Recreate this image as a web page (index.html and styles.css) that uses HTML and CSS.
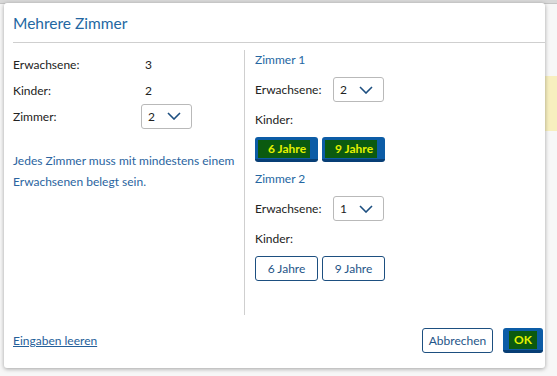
FILE: index.html
```html
<!DOCTYPE html>
<html lang="de">
<head>
<meta charset="UTF-8">
<title>Mehrere Zimmer</title>
<link rel="stylesheet" href="styles.css">
</head>
<body>
    <div class="page">
        <div class="page-top"></div>
        <div class="page-band"></div>
    </div>

    <div class="dialog">
        <div class="dialog-head">Mehrere Zimmer</div>

        <div class="dialog-body">
            <div class="col-left">
                <div class="row"><span class="lbl">Erwachsene:</span><span class="val">3</span></div>
                <div class="row"><span class="lbl">Kinder:</span><span class="val">2</span></div>
                <div class="row"><span class="lbl">Zimmer:</span>
                    <span class="select"><span>2</span>
                        <svg width="14" height="8" viewBox="0 0 14 8"><path d="M1 1 L7 7 L13 1" fill="none" stroke="#1d4f80" stroke-width="1.6"/></svg>
                    </span>
                </div>
                <p class="note">Jedes Zimmer muss mit mindestens einem Erwachsenen belegt sein.</p>
            </div>

            <div class="col-right">
                <div class="room-title">Zimmer 1</div>
                <div class="row2"><span class="lbl2">Erwachsene:</span>
                    <span class="select"><span>2</span>
                        <svg width="14" height="8" viewBox="0 0 14 8"><path d="M1 1 L7 7 L13 1" fill="none" stroke="#1d4f80" stroke-width="1.6"/></svg>
                    </span>
                </div>
                <div class="kid-label">Kinder:</div>
                <div class="kids">
                    <button class="age on"><span class="hl">6 Jahre</span></button>
                    <button class="age on"><span class="hl">9 Jahre</span></button>
                </div>

                <div class="room-title">Zimmer 2</div>
                <div class="row2"><span class="lbl2">Erwachsene:</span>
                    <span class="select"><span>1</span>
                        <svg width="14" height="8" viewBox="0 0 14 8"><path d="M1 1 L7 7 L13 1" fill="none" stroke="#1d4f80" stroke-width="1.6"/></svg>
                    </span>
                </div>
                <div class="kid-label">Kinder:</div>
                <div class="kids">
                    <button class="age">6 Jahre</button>
                    <button class="age">9 Jahre</button>
                </div>
            </div>
        </div>

        <div class="dialog-foot">
            <a href="#" class="clear">Eingaben leeren</a>
            <div class="foot-btns">
                <button class="btn-cancel">Abbrechen</button>
                <button class="btn-ok"><span class="hl">OK</span></button>
            </div>
        </div>
    </div>
</body>
</html>
```

FILE: styles.css
```css
body{
    margin: 0;
    background: #f7f7f7;
    font-family: Lato, "Liberation Sans", sans-serif;
    font-size: 12px;
    color: #222;
}

/* the page behind the dialog */
.page{
    height: 376px;
    overflow: hidden;
}
.page-top{
    height: 3px;
    background: #d9d9d9;
    border-bottom: 1px solid #c4c4c4;
}
.page-band{
    margin: 72px 0 0 540px;
    height: 55px;
    background: #f7efbf;
}

.dialog{
    position: absolute;
    left: 4px;
    top: 3px;
    width: 532px;
    height: 365px;
    padding: 0 0 0 9px;
    background: #fff;
    border-radius: 3px;
    box-shadow: 0 1px 4px rgba(0,0,0,0.35);
    display: flex;
    flex-direction: column;
}

.dialog-head{
    box-sizing: border-box;
    height: 40px;
    line-height: 38px;
    padding-top: 1px;
    font-size: 15.5px;
    color: #2467a2;
    border-bottom: 1px solid #cfcfcf;
}

.dialog-body{
    display: flex;
    margin-top: 7px;
    height: 265px;
}

.col-left{
    width: 231px;
    border-right: 1px solid #cfcfcf;
    padding-top: 1px;
}
.row{
    display: flex;
    align-items: center;
    height: 26px;
}
.lbl{
    width: 128px;
}
.val{
    padding-left: 4px;
}

.select{
    display: flex;
    align-items: center;
    justify-content: space-between;
    box-sizing: border-box;
    width: 51px;
    height: 25px;
    padding: 0 10px 0 6px;
    border: 1px solid #b9b9b9;
    border-radius: 3px;
    background: #fff;
}

.note{
    margin: 21px 0 0 0;
    line-height: 21px;
    color: #2a64a0;
    padding-right: 6px;
}

.col-right{
    padding-left: 10px;
    display: flex;
    flex-direction: column;
    gap: 7px;
}
.room-title{
    height: 20px;
    line-height: 20px;
    color: #2467a2;
}
.row2{
    display: flex;
    align-items: center;
    height: 25px;
}
.lbl2{
    width: 78px;
}
.kid-label{
    height: 21px;
    line-height: 21px;
}
.kids{
    display: flex;
    gap: 4px;
}

.age{
    width: 63px;
    height: 25px;
    font-family: inherit;
    font-size: 12px;
    border-radius: 3px;
    border: 1px solid #1d4f80;
    background: #fff;
    color: #1f5588;
    padding: 0;
    cursor: pointer;
}
.age.on{
    background: #0c5ca6;
    border: none;
    border-bottom: 3px solid #073e75;
    text-align: left;
    padding: 2px 0 0 3px;
    font-weight: bold;
}
.hl{
    display: inline-block;
    background: #0b5a10;
    color: #e3f200;
    padding: 2px 4px 2px 10px;
    line-height: 14px;
}

.dialog-foot{
    flex: 1;
    display: flex;
    align-items: center;
    justify-content: space-between;
    padding-right: 2px;
    padding-bottom: 2px;
}
.clear{
    color: #25609a;
}
.foot-btns{
    display: flex;
    gap: 10px;
}
.btn-cancel{
    height: 25px;
    width: 71px;
    font-family: inherit;
    font-size: 12px;
    border: 1px solid #1d4f80;
    border-radius: 3px;
    background: #fff;
    color: #1f5588;
    padding: 0;
}
.btn-ok{
    height: 25px;
    width: 40px;
    border: none;
    border-bottom: 3px solid #073e75;
    border-radius: 3px;
    background: #0c5ca6;
    font-family: inherit;
    font-size: 12px;
    font-weight: bold;
    padding: 2px 0 0 0;
}
.btn-ok .hl{
    padding: 2px 5px;
}
```
